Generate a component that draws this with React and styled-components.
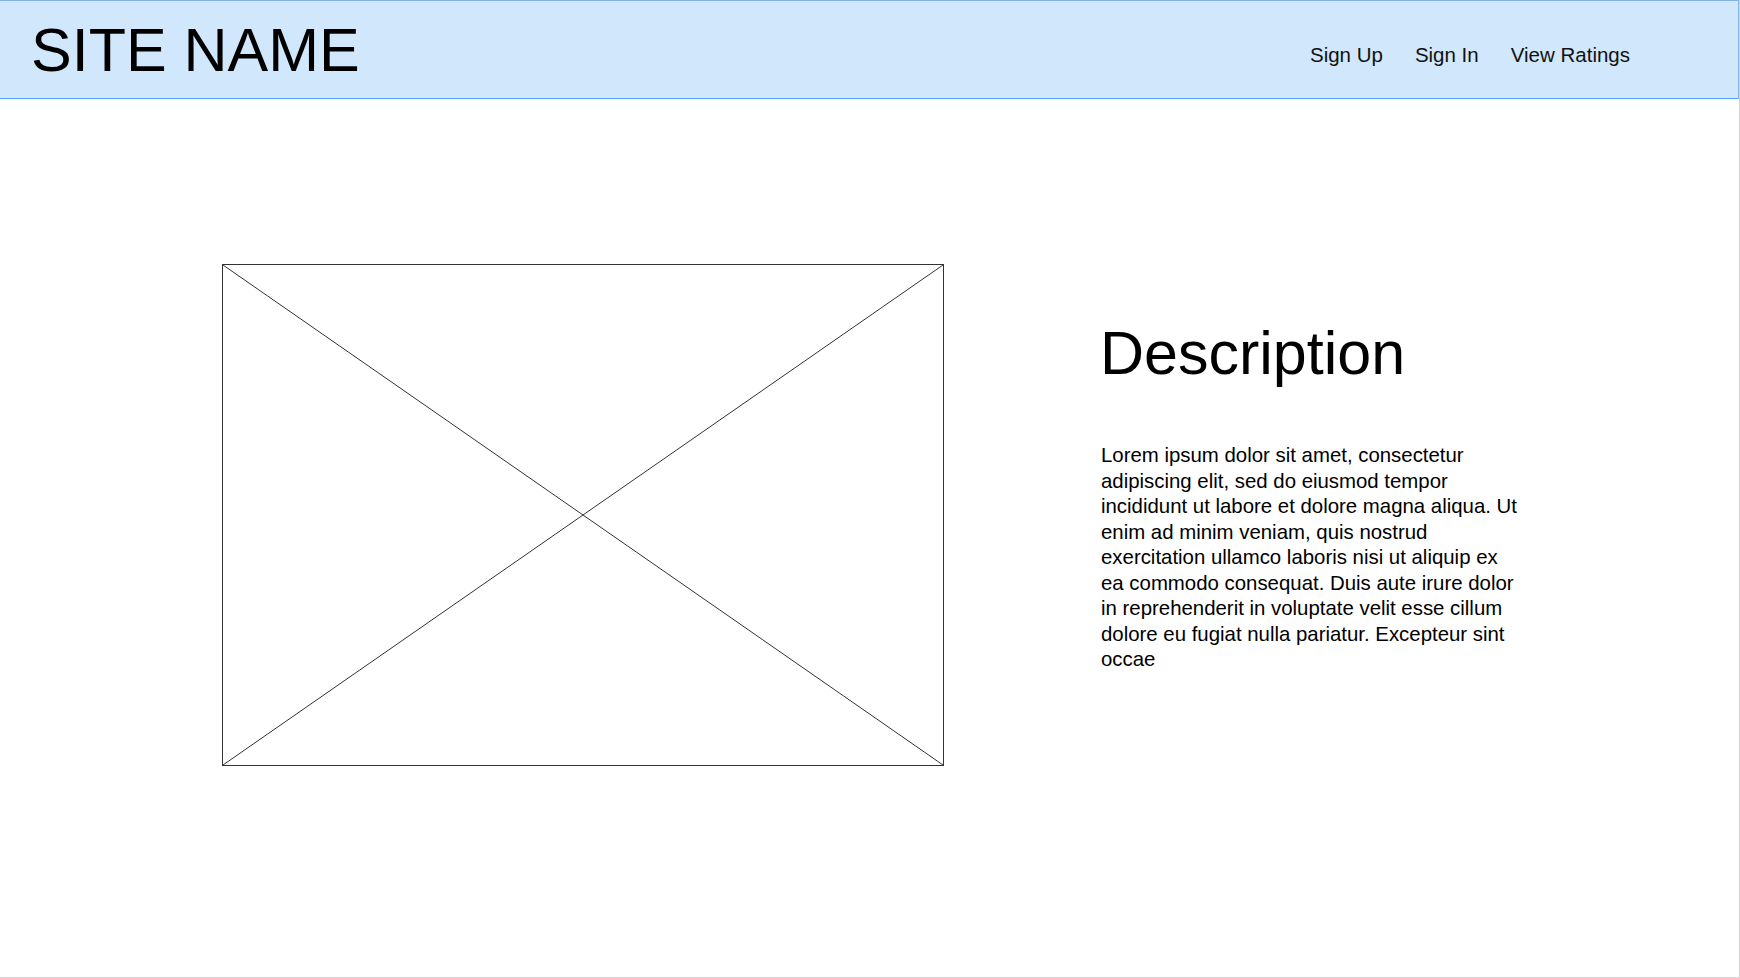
import React from "react";
import styled, { createGlobalStyle } from "styled-components";

const GlobalStyle = createGlobalStyle`
  html, body { margin: 0; padding: 0; background: #ffffff; }
  body { font-family: "Liberation Sans", Arial, sans-serif; color: #000; }
  * { box-sizing: border-box; }
`;

const Page = styled.div`
  width: 1740px;
  height: 978px;
  border-right: 1px solid #d4d4d4;
  border-bottom: 1px solid #d4d4d4;
  display: flex;
  flex-direction: column;
  overflow: hidden;
`;

const Header = styled.header`
  height: 99px;
  flex: none;
  display: flex;
  align-items: flex-start;
  justify-content: space-between;
  background: #d1e7fb;
  border-top: 1px solid #80b3e2;
  border-right: 1px solid #86b5e0;
  border-bottom: 1px solid #55a6f7;
  padding: 0 108px 0 31px;
`;

const Logo = styled.div`
  font-size: 61px;
  line-height: 61px;
  margin-top: 19px;
  white-space: nowrap;
`;

const Nav = styled.nav`
  display: flex;
  gap: 32px;
  margin-top: 44px;
`;

const NavLink = styled.a`
  font-size: 20.5px;
  line-height: 20.5px;
  color: #111;
  text-decoration: none;
  white-space: nowrap;
`;

const Main = styled.main`
  flex: 1;
  display: flex;
  align-items: flex-start;
  padding: 165px 0 0 222px;
  gap: 158px;
`;

const Placeholder = styled.div`
  width: 722px;
  height: 502px;
  border: 1px solid #333;
  flex: none;
  display: flex;
  svg {
    display: block;
    width: 100%;
    height: 100%;
  }
`;

const Info = styled.section`
  width: 430px;
  margin-top: 59px;
  display: flex;
  flex-direction: column;
  gap: 59px;
`;

const Title = styled.h1`
  margin: 0 0 0 -2px;
  font-weight: normal;
  font-size: 61px;
  line-height: 61px;
`;

const Body = styled.p`
  margin: 0 0 0 -1px;
  font-size: 20.4px;
  line-height: 25.5px;
  width: 421px;
`;

export default function App() {
  return (
    <>
      <GlobalStyle />
      <Page>
        <Header>
          <Logo>SITE NAME</Logo>
          <Nav>
            <NavLink href="#">Sign Up</NavLink>
            <NavLink href="#">Sign In</NavLink>
            <NavLink href="#">View Ratings</NavLink>
          </Nav>
        </Header>
        <Main>
          <Placeholder>
            <svg viewBox="0 0 720 500" preserveAspectRatio="none">
              <line x1="0" y1="0" x2="720" y2="500" stroke="#333" strokeWidth="1" vectorEffect="non-scaling-stroke" />
              <line x1="720" y1="0" x2="0" y2="500" stroke="#333" strokeWidth="1" vectorEffect="non-scaling-stroke" />
            </svg>
          </Placeholder>
          <Info>
            <Title>Description</Title>
            <Body>
              Lorem ipsum dolor sit amet, consectetur adipiscing elit, sed do eiusmod tempor
              incididunt ut labore et dolore magna aliqua. Ut enim ad minim veniam, quis nostrud
              exercitation ullamco laboris nisi ut aliquip ex ea commodo consequat. Duis aute irure
              dolor in reprehenderit in voluptate velit esse cillum dolore eu fugiat nulla pariatur.
              Excepteur sint occae
            </Body>
          </Info>
        </Main>
      </Page>
    </>
  );
}
